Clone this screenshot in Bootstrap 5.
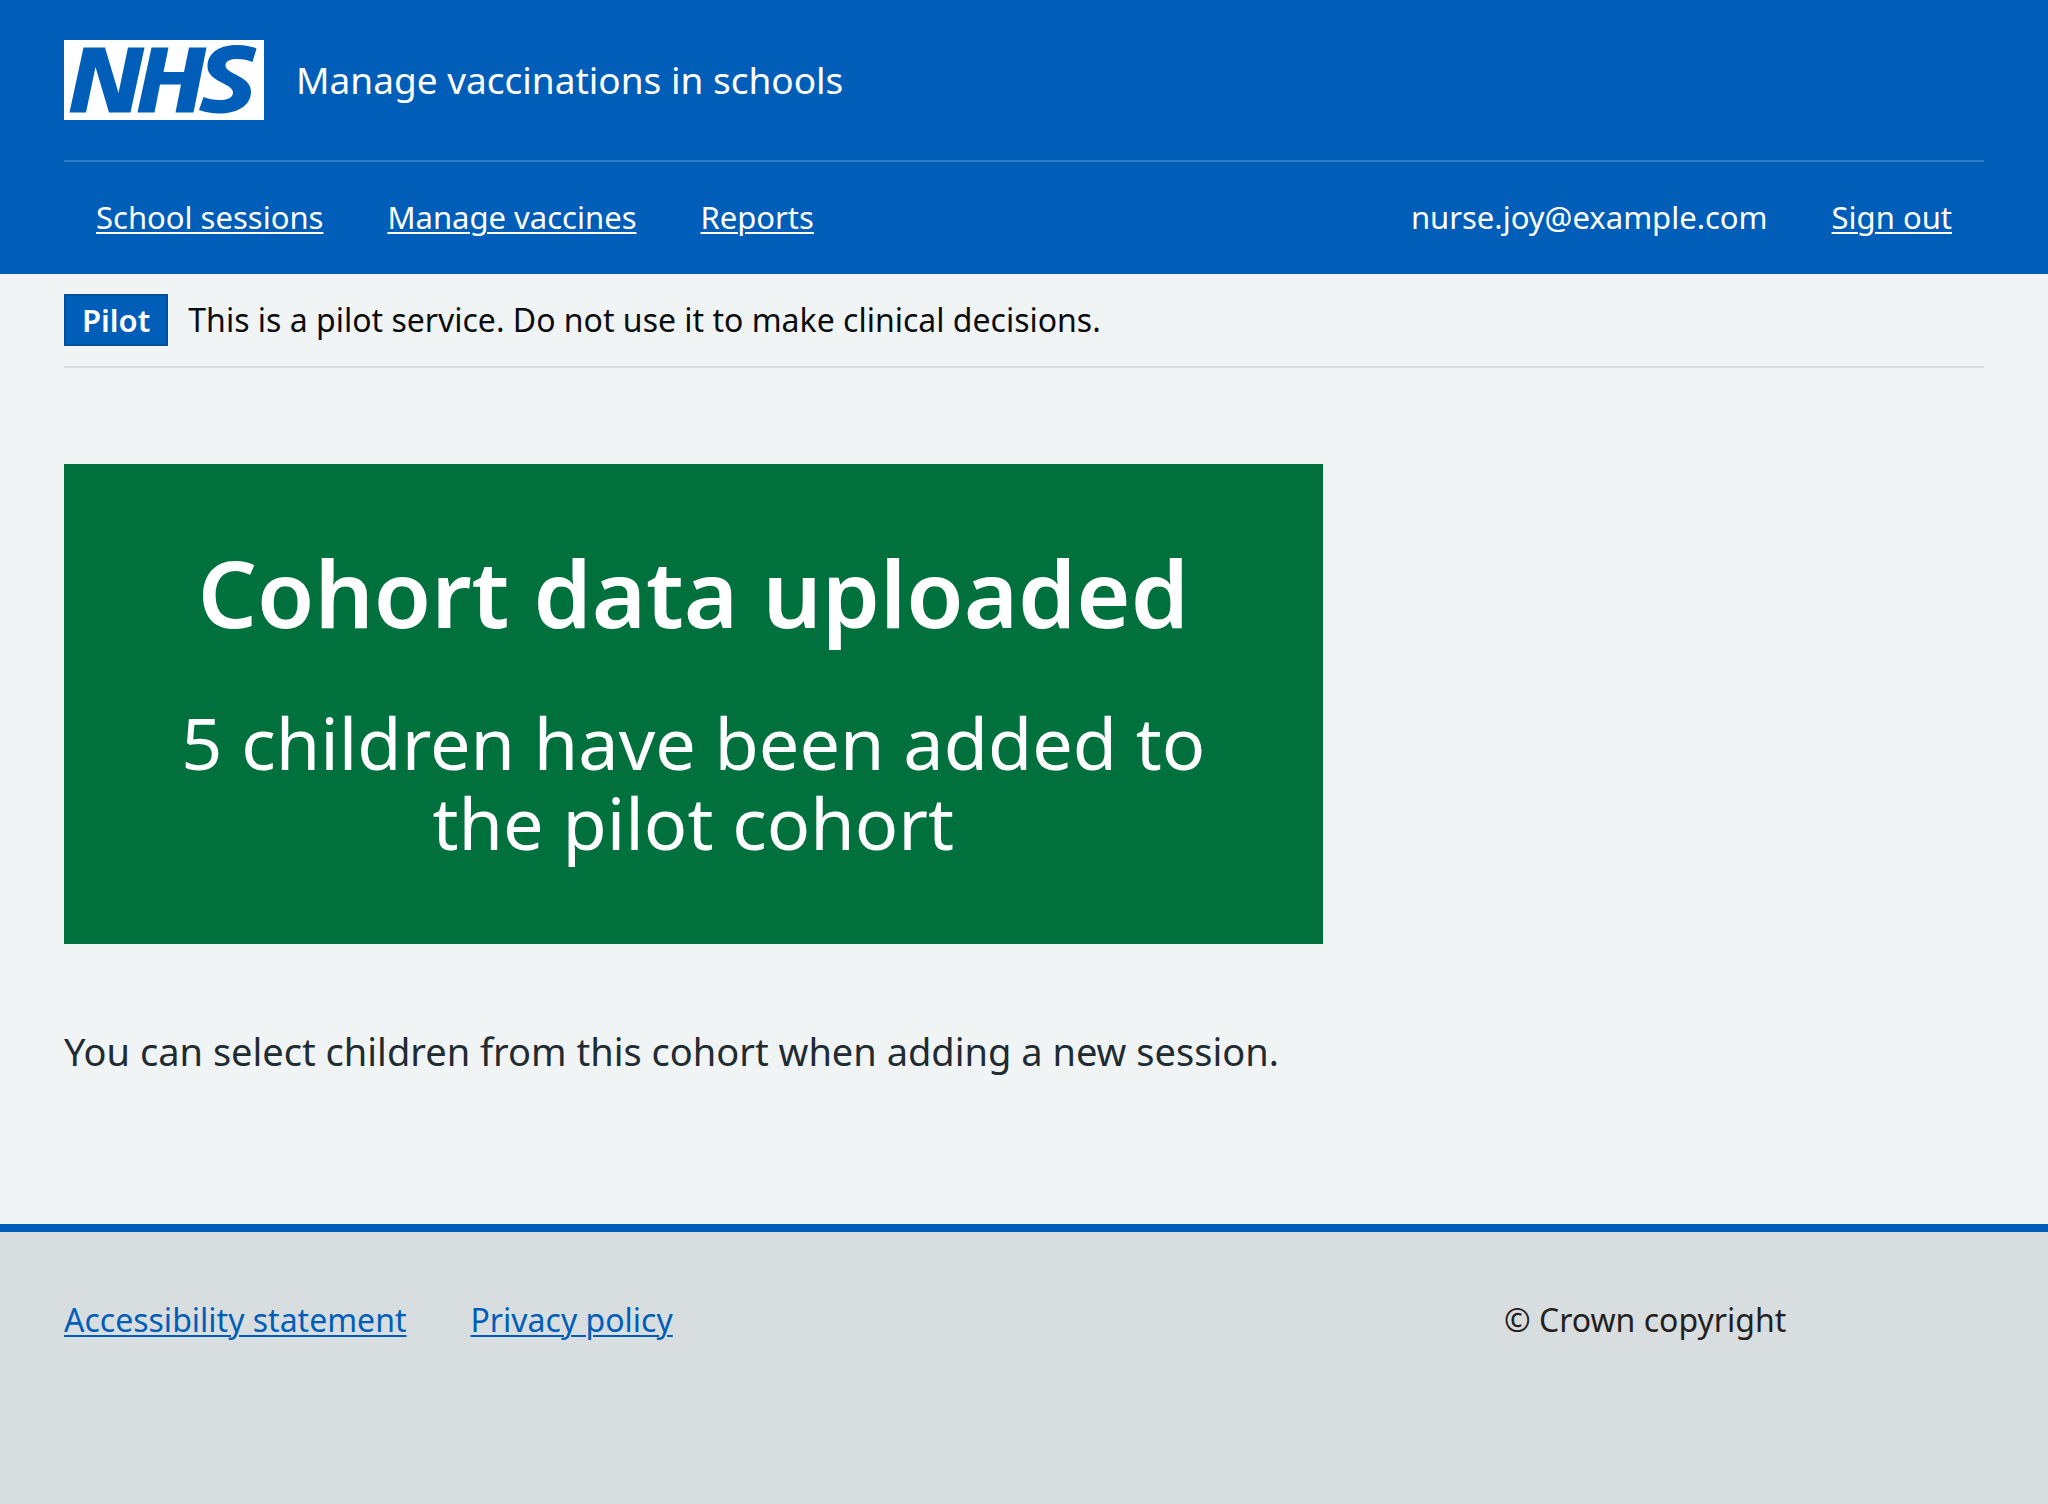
<!DOCTYPE html>
<html lang="en">
<head>
<meta charset="utf-8">
<meta name="viewport" content="width=device-width, initial-scale=1">
<title>Cohort data uploaded - Manage vaccinations in schools</title>
<link rel="stylesheet" href="https://cdn.jsdelivr.net/npm/bootstrap@5.3.0/dist/css/bootstrap.min.css">
<style>
  :root { --nhs-blue: #005eb8; --page-grey: #f0f4f5; --footer-grey: #d8dde0; }
  body { font-family: "Noto Sans", "Open Sans", sans-serif; font-size: 32px; line-height: 48px; background: var(--page-grey); color: #212b32; }
  .page-width { padding-left: 64px; padding-right: 64px; }
  .site-header { background: var(--nhs-blue); color: #fff; }
  .masthead { padding: 40px 0; gap: 32px; }
  .service-name { font-size: 37px; color: #fff; text-decoration: none; }
  .nhs-logo { width: 200px; height: 80px; display: block; }
  .site-nav { border-top: 2px solid rgba(255, 255, 255, .2); padding: 31px 32px 33px; font-size: 31px; }
  .link-row { gap: 16px 64px; }
  .site-nav a { color: #fff; }
  a { text-decoration-thickness: 2px; text-underline-offset: 3px; }
  .phase-banner { padding: 20px 0; border-bottom: 2px solid var(--footer-grey); color: #0b0c0c; gap: 20px; line-height: 52px; }
  .phase-tag { background: var(--nhs-blue); border: 2px solid #004f9b; color: #fff; font-size: 31px; font-weight: 600; line-height: 48px; padding: 0 16px; }
  .main-area { padding-top: 96px; padding-bottom: 144px; }
  .main-row { --bs-gutter-x: 64px; }
  .result-panel { background: #00703c; color: #fff; padding: 80px 80px 82px; }
  .result-panel h1 { font-size: 93px; font-weight: 600; line-height: 96px; margin-bottom: 62px; }
  .result-panel p { font-size: 72px; line-height: 80px; }
  .body-text { font-size: 38px; line-height: 54px; margin-top: 80px; padding-bottom: 2px; }
  .site-footer { background: var(--footer-grey); border-top: 8px solid var(--nhs-blue); color: #231f20; padding-top: 64px; padding-bottom: 64px; }
  .site-footer a { color: var(--nhs-blue); }
</style>
<script src="https://cdn.jsdelivr.net/npm/bootstrap@5.3.0/dist/js/bootstrap.bundle.min.js" defer></script>
</head>
<body class="d-flex flex-column min-vh-100">
<header class="site-header">
  <div class="container-fluid page-width">
    <div class="masthead d-flex align-items-center">
      <a href="#" aria-label="NHS home">
        <svg class="nhs-logo" viewBox="0 0 200 80" aria-hidden="true">
          <rect width="200" height="80" fill="#fff"/>
          <g fill="#005eb8">
            <path d="M19.5 7.5H41L54.500 53L64 7.500H80.500L66.500 72.500H45L31.500 27L22 72.500H5.500Z"/>
            <path d="M91 7.500H104.500L99.500 32H120L125 7.500H142.500L129.500 72.500H111.500L117 44.500H96L90.500 72.500H73.500L87.500 7.500Z"/>
            <path d="M192.500 8.500L188.500 22C184 20 179 19 173 19C167 19 161.500 20.500 161.500 25.500C161.500 34 187 36 187 51.500C187 67 171 73.500 155.500 73.500C148 73.500 141 72 135 70L139.500 57C144 59 150 60 155.500 60C162 60 169 58.500 169 52.500C169 43 143.500 42 143.500 26.500C143.500 11 158 5 173 5C180.500 5 188 6.500 192.500 8.500Z"/>
          </g>
        </svg>
      </a>
      <a class="service-name" href="#">Manage vaccinations in schools</a>
    </div>
    <nav class="site-nav d-flex flex-wrap justify-content-between" aria-label="Primary">
      <ul class="link-row list-unstyled d-flex flex-wrap mb-0">
        <li><a href="#">School sessions</a></li>
        <li><a href="#">Manage vaccines</a></li>
        <li><a href="#">Reports</a></li>
      </ul>
      <ul class="link-row list-unstyled d-flex flex-wrap mb-0">
        <li>nurse.joy@example.com</li>
        <li><a href="#">Sign out</a></li>
      </ul>
    </nav>
  </div>
</header>
<div class="container-fluid page-width">
  <div class="phase-banner d-flex align-items-center">
    <strong class="phase-tag">Pilot</strong>
    <span>This is a pilot service. Do not use it to make clinical decisions.</span>
  </div>
</div>
<main class="main-area container-fluid page-width">
  <div class="main-row row">
    <div class="col-12 col-lg-8">
      <div class="result-panel text-center">
        <h1>Cohort data uploaded</h1>
        <p class="mb-0">5 children have been added to the pilot cohort</p>
      </div>
      <p class="body-text mb-0">You can select children from this cohort when adding a new session.</p>
    </div>
  </div>
</main>
<footer class="site-footer flex-grow-1">
  <div class="container-fluid page-width">
    <div class="row g-0">
      <ul class="link-row col-12 col-lg-9 list-unstyled d-flex flex-wrap mb-0">
        <li><a href="#">Accessibility statement</a></li>
        <li><a href="#">Privacy policy</a></li>
      </ul>
      <p class="col-12 col-lg-3 mb-0">© Crown copyright</p>
    </div>
  </div>
</footer>
</body>
</html>
